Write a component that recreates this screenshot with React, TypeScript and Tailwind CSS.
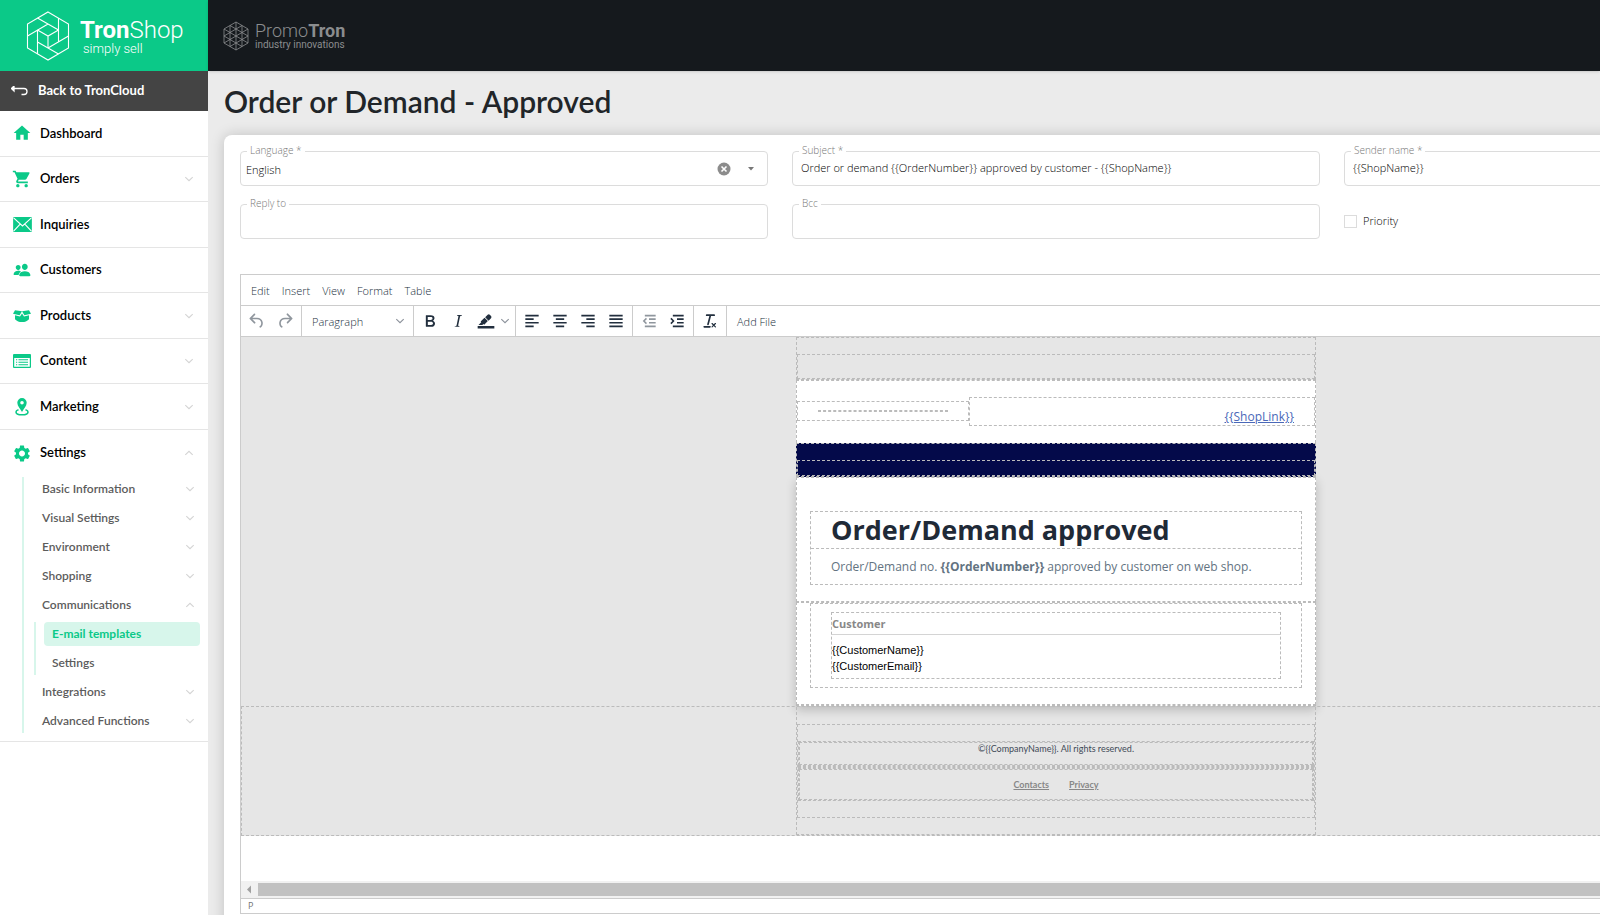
import { ReactNode } from 'react'
import { IoPeople } from 'react-icons/io5'
import { MdHome, MdSettings, MdShoppingCart } from 'react-icons/md'

type ChevronProps = {
  open?: boolean
  className?: string
}

function Chevron({ open, className = 'text-neutral-300' }: ChevronProps) {
  return (
    <svg
      viewBox="0 0 10 6"
      className={`h-[6px] w-[10px] shrink-0 ${className}`}
      fill="none"
      stroke="currentColor"
      strokeWidth="1.1"
    >
      <path d={open ? 'M1.3 4.8 5 1.3l3.700 3.500' : 'M1.3 1.200 5 4.700l3.700-3.500'} />
    </svg>
  )
}

function TronShopLogo() {
  return (
    <a href="#" className="flex h-[71px] items-center bg-[#0bc988] pl-[26px] text-white">
      <svg
        viewBox="0 0 44 50"
        className="h-[50px] w-[44px] shrink-0"
        fill="none"
        stroke="currentColor"
        strokeWidth="1.1"
      >
        <path d="M22 1 42.500 13v24L22 49 1.500 37V13z" />
        <path d="M11.500 7 32.500 19M32.500 7v24M42.500 25 22 37M32.500 43 11.500 31M11.500 43V19M1.500 25 22 13" />
        <path d="M11.500 19 22 25l10.500-6M22 25v12" />
      </svg>
      <span className="ml-[10px] flex flex-col font-[Roboto,sans-serif]">
        <span className="text-[24px] leading-[26px] font-light">
          <b className="font-bold">Tron</b>Shop
        </span>
        <span className="pl-[3px] text-[13px] leading-[12px] font-light">simply sell</span>
      </span>
    </a>
  )
}

function PromoTronLogo() {
  return (
    <a href="#" className="flex items-center text-[#8b8d8f]">
      <svg
        viewBox="0 0 26 30"
        className="h-[30px] w-[26px] shrink-0"
        fill="none"
        stroke="currentColor"
        strokeWidth="0.8"
      >
        <path d="M13 1l12 7v14l-12 7-12-7V8z" />
        <path d="M13 1v28M7 4.500v21M19 4.500v21" />
        <path d="M1 8l24 14M1 22 25 8M7 4.500l18 10.500-18 10.500M19 4.500 1 15l18 10.500" />
      </svg>
      <span className="ml-[6px] flex flex-col font-[Roboto,sans-serif]">
        <span className="text-[18px] leading-[18px] font-light">
          Promo<b className="font-bold">Tron</b>
        </span>
        <span className="text-[10px] leading-[10px]">industry innovations</span>
      </span>
    </a>
  )
}

const EnvelopeIcon = () => (
  <svg viewBox="0 0 20 16" className="h-[15px] w-[19px]" fill="currentColor">
    <rect width="20" height="16" rx="1" />
    <path
      d="M0.500 1 10 9.500 19.500 1M0.500 15 7.500 7.500M19.500 15l-7-7.500"
      fill="none"
      stroke="#fff"
      strokeWidth="1.200"
    />
  </svg>
)

const BoxIcon = () => (
  <svg viewBox="0 0 18 12" className="h-[12px] w-[18px]" fill="currentColor">
    <path d="M2 0.300 9 1.200 6.600 5.300 0 3.800zM16 0.300 9 1.200l2.400 4.100L18 3.800z" />
    <path d="M2 5.300l5 1.200L9 3.400l2 3.100 5-1.200v3.900C14 11.200 12 12 9 12s-5-.8-7-2.800z" />
  </svg>
)

const ContentIcon = () => (
  <svg viewBox="0 0 18 14" className="h-[14px] w-[18px]" fill="currentColor">
    <path
      fillRule="evenodd"
      d="M1 0h16a1 1 0 0 1 1 1v12a1 1 0 0 1-1 1H1a1 1 0 0 1-1-1V1a1 1 0 0 1 1-1zm0.200 4v8.800h15.600V4z"
    />
    <path d="M3 5.200h1.200v1H3zM5.500 5.200H15v1H5.500zM3 7.700h1.200v1H3zM5.500 7.700H15v1H5.500zM3 10.200h1.200v1H3zM5.500 10.200H15v1H5.500z" />
  </svg>
)

const PinIcon = () => (
  <svg viewBox="0 0 14 18" className="h-[18px] w-[14px]" fill="currentColor">
    <path
      fillRule="evenodd"
      d="M7 0a4.700 4.700 0 0 1 4.700 4.700C11.700 8 8.500 11 7 14 5.500 11 2.300 8 2.300 4.700A4.700 4.700 0 0 1 7 0zm0 3a1.800 1.800 0 1 0 0 3.600A1.800 1.800 0 0 0 7 3z"
    />
    <path
      d="M3.500 11.800C1.800 12.300 1 13 1 13.900c0 1.700 2.700 2.900 6 2.900s6-1.200 6-2.900c0-.9-.8-1.600-2.500-2.100"
      fill="none"
      stroke="currentColor"
      strokeWidth="1.600"
    />
  </svg>
)

type NavItem = {
  label: string
  icon: ReactNode
  expandable?: boolean
}

const navItems: NavItem[] = [
  { label: 'Dashboard', icon: <MdHome size={20} /> },
  { label: 'Orders', icon: <MdShoppingCart size={20} />, expandable: true },
  { label: 'Inquiries', icon: <EnvelopeIcon /> },
  { label: 'Customers', icon: <IoPeople size={18} /> },
  { label: 'Products', icon: <BoxIcon />, expandable: true },
  { label: 'Content', icon: <ContentIcon />, expandable: true },
  { label: 'Marketing', icon: <PinIcon />, expandable: true },
]

function NavLabel({ label, icon }: NavItem) {
  return (
    <>
      <span className="flex w-5 justify-center text-[#0bc988]">{icon}</span>
      <span className="ml-2 grow text-left">{label}</span>
    </>
  )
}

function SubItem({ label, open }: { label: string; open?: boolean }) {
  return (
    <button className="flex h-6 w-full items-center justify-between pr-[13px] pl-[18px]">
      {label}
      <Chevron open={open} />
    </button>
  )
}

function Sidebar() {
  return (
    <nav className="w-52 shrink-0 bg-white font-[Lato,sans-serif] text-[13px] font-semibold text-black">
      <TronShopLogo />
      <a href="#" className="flex h-10 items-center bg-[#444] pl-[11px] font-bold text-white">
        <svg
          viewBox="0 0 17 10"
          className="h-[10px] w-[17px]"
          fill="none"
          stroke="currentColor"
          strokeWidth="1.300"
        >
          <path d="M3 0v5L0.500 2.500zM1 2.500h12a3 3 0 0 1 0 6h-2.500" />
        </svg>
        <span className="ml-[10px]">Back to TronCloud</span>
      </a>
      <div className="grid h-[319px] auto-rows-fr">
        {navItems.map((item) => (
          <button
            key={item.label}
            className="flex items-center border-b border-neutral-200 pr-[14px] pl-3"
          >
            <NavLabel {...item} />
            {item.expandable && <Chevron />}
          </button>
        ))}
      </div>
      <div className="border-b border-neutral-200 pb-2">
        <button className="flex h-[46px] w-full items-center pr-[14px] pl-3">
          <NavLabel label="Settings" icon={<MdSettings size={21} />} />
          <Chevron open />
        </button>
        <div className="mt-px ml-[22px] flex flex-col gap-[5px] border-l-2 border-[#d7f6eb] text-xs text-[#5c5c5c]">
          <SubItem label="Basic Information" />
          <SubItem label="Visual Settings" />
          <SubItem label="Environment" />
          <SubItem label="Shopping" />
          <SubItem label="Communications" open />
          <div className="mr-2 ml-[10px] flex flex-col gap-[5px] border-l-2 border-[#d7f6eb] pl-2">
            <a
              href="#"
              className="flex h-6 items-center rounded bg-[#d7f6eb] pl-2 font-bold text-[#0bc988]"
            >
              E-mail templates
            </a>
            <a href="#" className="flex h-6 items-center pl-2">
              Settings
            </a>
          </div>
          <SubItem label="Integrations" />
          <SubItem label="Advanced Functions" />
        </div>
      </div>
    </nav>
  )
}

type FieldProps = {
  id: string
  label: string
  children: ReactNode
}

function Field({ id, label, children }: FieldProps) {
  return (
    <div className="relative flex h-[35px] items-center rounded border border-[#dcdcdc]">
      <label
        htmlFor={id}
        className="absolute -top-2 left-[6px] bg-white px-[3px] text-[10px] leading-[13px] font-light text-[#777]"
      >
        {label}
      </label>
      {children}
    </div>
  )
}

function TextField({ id, label, value }: { id: string; label: string; value?: string }) {
  return (
    <Field id={id} label={label}>
      <input
        id={id}
        type="text"
        defaultValue={value}
        className="w-full bg-transparent px-2 text-[11px] font-light text-black outline-none"
      />
    </Field>
  )
}

function TemplateForm() {
  return (
    <form className="grid grid-cols-3 gap-x-6 gap-y-[18px]">
      <Field id="language" label="Language *">
        <select
          id="language"
          className="h-full grow appearance-none bg-transparent pt-[3px] pl-[5px] text-[11px] font-light text-black outline-none"
        >
          <option>English</option>
        </select>
        <button type="button" aria-label="Clear language" className="mr-[17px]">
          <svg viewBox="0 0 14 14" className="size-[14px]">
            <circle cx="7" cy="7" r="6.500" fill="#8c8c8c" />
            <path d="M4.500 4.500l5 5m0-5-5 5" stroke="#fff" strokeWidth="1.600" />
          </svg>
        </button>
        <svg viewBox="0 0 6 4" className="mr-[13px] h-[4px] w-[6px]" fill="#777">
          <path d="M0 0h6L3 3.500z" />
        </svg>
      </Field>
      <TextField
        id="subject"
        label="Subject *"
        value="Order or demand {{OrderNumber}} approved by customer - {{ShopName}}"
      />
      <TextField id="sender" label="Sender name *" value="{{ShopName}}" />
      <TextField id="reply" label="Reply to" />
      <TextField id="bcc" label="Bcc" />
      <label className="flex items-center gap-[6px] text-[11px] font-light text-black">
        <input
          type="checkbox"
          className="size-[13px] appearance-none border border-[#dcdcdc] bg-white"
        />
        Priority
      </label>
    </form>
  )
}

const icons = {
  undo: 'M6.4 8H12c3.7 0 6.2 2 6.8 5.1.6 2.7-.4 5.6-2.3 6.8a1 1 0 0 1-1-1.8c1.1-.6 1.8-2.7 1.4-4.6-.5-2.1-2.1-3.500-4.900-3.500H6.400l3.300 3.300a1 1 0 1 1-1.400 1.400l-5-5a1 1 0 0 1 0-1.400l5-5a1 1 0 0 1 1.400 1.400L6.400 8Z',
  redo: 'M17.6 10H12c-2.800 0-4.400 1.400-4.900 3.500-.4 2 .3 4 1.400 4.600a1 1 0 1 1-1 1.800c-2-1.200-2.900-4.100-2.300-6.800.6-3 3-5.100 6.800-5.100h5.600l-3.300-3.300a1 1 0 1 1 1.400-1.400l5 5a1 1 0 0 1 0 1.400l-5 5a1 1 0 0 1-1.400-1.400l3.300-3.300Z',
  bold: 'M7.8 19c-.3 0-.5 0-.6-.2l-.2-.5V5.700c0-.2 0-.4.2-.5l.6-.2h5c1.500 0 2.700.3 3.500 1 .7.6 1.100 1.400 1.100 2.500a3 3 0 0 1-.6 1.900c-.4.6-1 1-1.600 1.200.4.1.9.3 1.300.6s.8.7 1 1.200c.4.4.5 1 .5 1.600 0 1.300-.4 2.300-1.300 3-.8.7-2.100 1-3.800 1H7.800Zm5-8.300c.6 0 1.200-.1 1.600-.5.4-.3.6-.7.6-1.300 0-1.100-.8-1.700-2.300-1.700H9.300v3.500h3.400Zm.5 6c.7 0 1.300-.1 1.700-.4.4-.4.6-.9.6-1.500s-.2-1-.7-1.400c-.4-.3-1-.4-2-.4H9.400v3.800h4Z',
  italic:
    'm16.7 4.700-.1.9h-.3c-.6 0-1 0-1.400.3-.3.3-.4.6-.5 1.100l-2.100 9.800v.6c0 .5.4.8 1.400.8h.2l-.2.8H8l.2-.8h.2c1.100 0 1.800-.5 2-1.500l2-9.800.1-.5c0-.6-.4-.8-1.400-.8h-.3l.2-.9h5.800Z',
  highlight:
    'M2 18h20v3H2zM7.700 16.700H3l3.300-3.300-.7-.8L10.200 8l4 4.100-4 4.200c-.2.2-.6.2-.8 0l-.6-.7-1.100 1.100zm5-7.500L11 7.400l3-2.900a2 2 0 0 1 2.600 0L18 6c.7.7.7 2 0 2.700l-2.900 2.900-1.800-1.800-.5-.6',
  alignLeft: 'M4 4.500h16v2H4zM4 8.800h10v2H4zM4 13.100h16v2H4zM4 17.400h10v2H4z',
  alignCenter: 'M4 4.500h16v2H4zM7 8.800h10v2H7zM4 13.100h16v2H4zM7 17.400h10v2H7z',
  alignRight: 'M4 4.500h16v2H4zM10 8.800h10v2H10zM4 13.100h16v2H4zM10 17.400h10v2H10z',
  justify: 'M4 4.500h16v2H4zM4 8.800h16v2H4zM4 13.100h16v2H4zM4 17.400h16v2H4z',
  outdent:
    'M7 4.500h13v2H7zM12 8.800h8v2h-8zM12 13.100h8v2h-8zM7 17.400h13v2H7zM8.300 8.200l1.300 1.300L7.100 12l2.500 2.500-1.300 1.300L4.500 12z',
  indent:
    'M7 4.500h13v2H7zM12 8.800h8v2h-8zM12 13.100h8v2h-8zM7 17.400h13v2H7zM5.300 8.200 4 9.500 6.500 12 4 14.500l1.300 1.300L9.100 12z',
  clear:
    'M13.200 6a1 1 0 0 1 0 .2l-2.600 10a1 1 0 0 1-1 .8h-.2a.8.800 0 0 1-.8-1l2.600-10H8a1 1 0 1 1 0-2h9a1 1 0 0 1 0 2h-3.800ZM5 18h7a1 1 0 0 1 0 2H5a1 1 0 0 1 0-2Zm13 1.500L16.500 18 15 19.500a.7.700 0 0 1-1-1l1.500-1.500-1.500-1.500a.7.700 0 0 1 1-1l1.500 1.500 1.500-1.500a.7.700 0 0 1 1 1L17.500 17l1.500 1.500a.7.700 0 0 1-1 1Z',
}

type ToolProps = {
  icon: keyof typeof icons
  disabled?: boolean
}

function Tool({ icon, disabled }: ToolProps) {
  return (
    <button
      type="button"
      aria-label={icon}
      disabled={disabled}
      className="flex h-full w-7 items-center justify-center disabled:opacity-50"
    >
      <svg viewBox="0 0 24 24" className="size-5" fill="currentColor">
        <path d={icons[icon]} />
      </svg>
    </button>
  )
}

function ToolGroup({ children }: { children: ReactNode }) {
  return <div className="flex h-full items-center border-r border-[#ccc] px-[2px]">{children}</div>
}

function Toolbar() {
  return (
    <div className="flex h-8 items-center border-y border-[#ccc]">
      <ToolGroup>
        <Tool icon="undo" disabled />
        <Tool icon="redo" disabled />
      </ToolGroup>
      <div className="relative flex h-full w-28 items-center border-r border-[#ccc]">
        <select
          aria-label="Block format"
          className="size-full appearance-none bg-transparent pt-[2px] pl-[10px] font-light outline-none"
        >
          <option>Paragraph</option>
        </select>
        <Chevron className="pointer-events-none absolute right-2 text-[#8b919a]" />
      </div>
      <ToolGroup>
        <Tool icon="bold" />
        <Tool icon="italic" />
        <Tool icon="highlight" />
        <button type="button" aria-label="Highlight color" className="flex w-[13px] justify-start">
          <Chevron className="text-[#8b919a]" />
        </button>
      </ToolGroup>
      <ToolGroup>
        <Tool icon="alignLeft" />
        <Tool icon="alignCenter" />
        <Tool icon="alignRight" />
        <Tool icon="justify" />
      </ToolGroup>
      <ToolGroup>
        <Tool icon="outdent" disabled />
        <Tool icon="indent" />
      </ToolGroup>
      <ToolGroup>
        <Tool icon="clear" />
      </ToolGroup>
      <button type="button" className="px-[10px] pt-[2px] font-light">
        Add File
      </button>
    </div>
  )
}

function EmailBody() {
  return (
    <div className="mx-auto w-[520px]">
      <div className="border border-dashed border-[#bbb] pt-4">
        <div className="h-[25px] border border-dashed border-[#bbb]" />
      </div>
      <div className="flex items-start border-x border-t border-dashed border-[#bbb] bg-white pt-4 pb-[17px]">
        <div className="mt-1 flex h-5 w-[172px] items-center border border-dashed border-[#bbb] px-5">
          <div className="h-[2px] grow border-y border-dashed border-[#bbb]" />
        </div>
        <div className="flex h-[29px] grow items-end justify-end border border-dashed border-[#bbb] px-5">
          <a href="#" className="text-xs leading-4 text-[#4a68b8] underline">
            {'{{ShopLink}}'}
          </a>
        </div>
      </div>
      <div className="border border-dashed border-[#bbb] bg-[#040a4a] pt-4">
        <div className="h-4 border border-dashed border-[#bbb]" />
      </div>
      <div className="border-b border-dashed border-[#bbb] bg-white shadow-[0_4px_10px_rgba(0,0,0,0.2)]">
        <div className="border border-dashed border-[#bbb] px-[13px] pt-[33px] pb-4">
          <div className="border border-dashed border-[#bbb]">
            <h2 className="pl-5 text-[27px] leading-[36px] font-bold text-[#1f2a37]">
              Order/Demand approved
            </h2>
            <p className="border-t border-dashed border-[#bbb] pt-px pl-5 text-xs leading-[34px] text-[#637381]">
              Order/Demand no. <b>{'{{OrderNumber}}'}</b> approved by customer on web shop.
            </p>
          </div>
        </div>
        <div className="border border-dashed border-[#bbb] px-[13px] pb-4">
          <div className="border border-dashed border-[#bbb] px-5 py-2">
            <div className="border border-dashed border-[#bbb] pb-1 text-[11px] leading-4 text-black">
              <div className="mb-[7px] border-b border-neutral-300 leading-[21px] font-bold text-[#888]">
                Customer
              </div>
              <div className="font-['Liberation_Sans',Arial,sans-serif]">
                {'{{CustomerName}}'}
                <br />
                {'{{CustomerEmail}}'}
              </div>
            </div>
          </div>
        </div>
      </div>
    </div>
  )
}

function EmailFooter() {
  return (
    <div className="border border-dashed border-[#bbb]">
      <div className="mx-auto w-[520px] border-x border-b border-dashed border-[#bbb] py-4 font-[Lato,sans-serif] text-[9px]">
        <div className="mt-px border border-dashed border-[#bbb] py-4">
          <div className="border border-dashed border-[#bbb]">
            <div className="h-[23px] border border-dashed border-[#bbb] text-center leading-[11px] text-[#3f4a57]">
              ©{'{{CompanyName}}'}. All rights reserved.
            </div>
          </div>
          <div className="h-[2px] border-y border-dashed border-[#bbb]" />
          <div className="border border-dashed border-[#bbb]">
            <div className="flex h-[31px] items-center justify-center gap-5 border border-dashed border-[#bbb] font-bold text-[#888]">
              <a href="#" className="underline">
                Contacts
              </a>
              <a href="#" className="underline">
                Privacy
              </a>
            </div>
          </div>
        </div>
      </div>
    </div>
  )
}

function Editor() {
  return (
    <section className="mt-[35px] border border-[#ccc] text-[11px] text-[#222f3e]">
      <div className="flex h-[30px] items-center gap-3 pt-[2px] pl-[10px] font-light">
        {['Edit', 'Insert', 'View', 'Format', 'Table'].map((menu) => (
          <button key={menu} type="button">
            {menu}
          </button>
        ))}
      </div>
      <Toolbar />
      <div className="bg-[#e6e6e6]">
        <EmailBody />
        <EmailFooter />
      </div>
      <div className="mt-[45px] flex h-[17px] items-center bg-[#f1f1f1]">
        <svg viewBox="0 0 17 17" className="size-[17px]" fill="#a0a0a0">
          <path d="M10 4.500v8l-4-4z" />
        </svg>
        <div className="h-[13px] grow bg-[#c1c1c1]" />
      </div>
      <div className="h-[15px] border-t border-[#ccc] pl-[7px] text-[9px] leading-[14px] text-neutral-500">
        P
      </div>
    </section>
  )
}

export default function App() {
  return (
    <div className="flex h-screen overflow-hidden bg-[#ebebeb] font-['Open_Sans',sans-serif]">
      <Sidebar />
      <div className="flex min-w-0 grow flex-col">
        <header className="flex h-[71px] shrink-0 items-center bg-[#15191d] pl-[15px] shadow-sm">
          <PromoTronLogo />
        </header>
        <main className="grow overflow-hidden pl-4">
          <h1 className="pb-1 font-[Lato,sans-serif] text-[30px] leading-[60px] font-semibold text-[#212529]">
            Order or Demand - Approved
          </h1>
          <div className="h-full min-w-[1664px] rounded-lg bg-white p-4 shadow-[0_0_14px_rgba(0,0,0,0.18)]">
            <TemplateForm />
            <Editor />
          </div>
        </main>
      </div>
    </div>
  )
}
